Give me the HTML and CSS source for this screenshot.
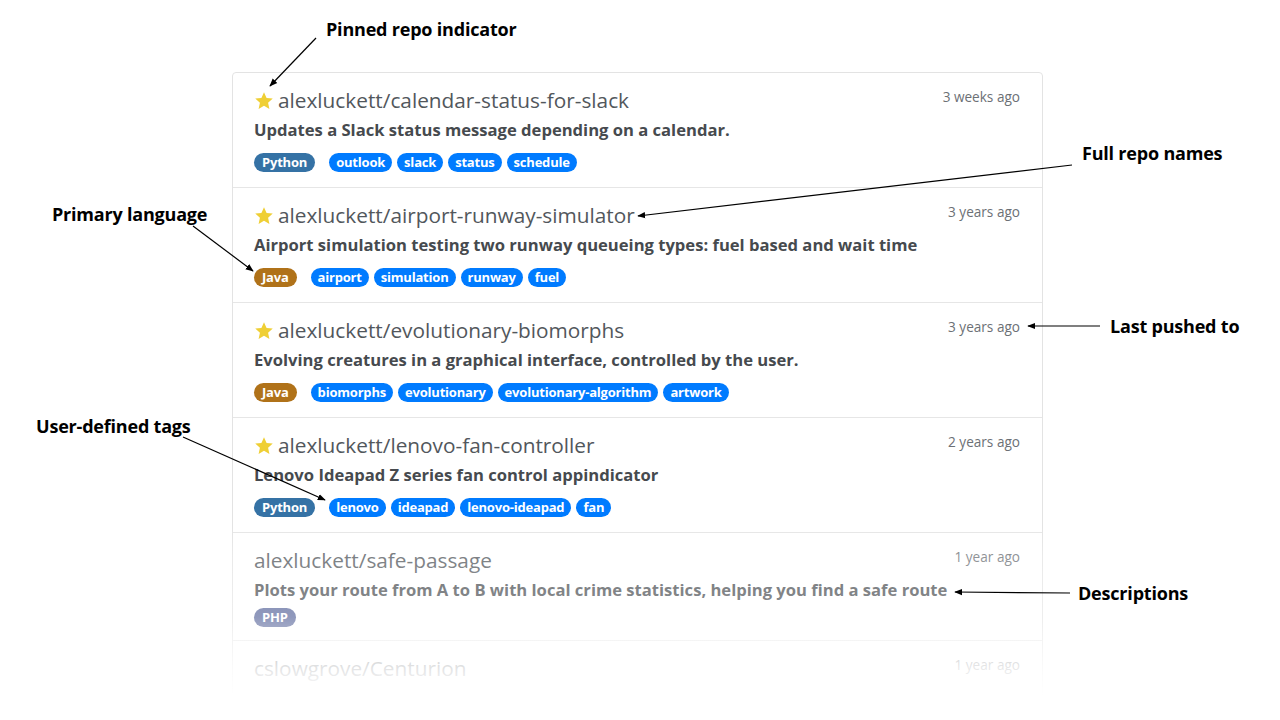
FILE: index.html
```html
<!DOCTYPE html>
<html>
<head>
<meta charset="utf-8">
<link rel="stylesheet" href="styles.css">
</head>
<body>
<div class="page">
  <div class="list-wrap">
    <ul class="repo-list">
      <li class="repo">
        <div class="repo-head">
          <span class="repo-name"><svg class="star" viewBox="0 0 24 24"><path d="M12 1.5l3.1 6.9 7.4.7-5.6 5 1.6 7.4L12 17.7l-6.5 3.8 1.6-7.4-5.6-5 7.4-.7z"/></svg>alexluckett/calendar-status-for-slack</span>
          <span class="repo-time">3 weeks ago</span>
        </div>
        <p class="repo-desc">Updates a Slack status message depending on a calendar.</p>
        <div class="badges">
          <span class="lang lang-python">Python</span>
          <span class="tags"><span class="tag">outlook</span><span class="tag">slack</span><span class="tag">status</span><span class="tag">schedule</span></span>
        </div>
      </li>
      <li class="repo">
        <div class="repo-head">
          <span class="repo-name"><svg class="star" viewBox="0 0 24 24"><path d="M12 1.5l3.1 6.9 7.4.7-5.6 5 1.6 7.4L12 17.7l-6.5 3.8 1.6-7.4-5.6-5 7.4-.7z"/></svg>alexluckett/airport-runway-simulator</span>
          <span class="repo-time">3 years ago</span>
        </div>
        <p class="repo-desc">Airport simulation testing two runway queueing types: fuel based and wait time</p>
        <div class="badges">
          <span class="lang lang-java">Java</span>
          <span class="tags"><span class="tag">airport</span><span class="tag">simulation</span><span class="tag">runway</span><span class="tag">fuel</span></span>
        </div>
      </li>
      <li class="repo">
        <div class="repo-head">
          <span class="repo-name"><svg class="star" viewBox="0 0 24 24"><path d="M12 1.5l3.1 6.9 7.4.7-5.6 5 1.6 7.4L12 17.7l-6.5 3.8 1.6-7.4-5.6-5 7.4-.7z"/></svg>alexluckett/evolutionary-biomorphs</span>
          <span class="repo-time">3 years ago</span>
        </div>
        <p class="repo-desc">Evolving creatures in a graphical interface, controlled by the user.</p>
        <div class="badges">
          <span class="lang lang-java">Java</span>
          <span class="tags"><span class="tag">biomorphs</span><span class="tag">evolutionary</span><span class="tag">evolutionary-algorithm</span><span class="tag">artwork</span></span>
        </div>
      </li>
      <li class="repo">
        <div class="repo-head">
          <span class="repo-name"><svg class="star" viewBox="0 0 24 24"><path d="M12 1.5l3.1 6.9 7.4.7-5.6 5 1.6 7.4L12 17.7l-6.5 3.8 1.6-7.4-5.6-5 7.4-.7z"/></svg>alexluckett/lenovo-fan-controller</span>
          <span class="repo-time">2 years ago</span>
        </div>
        <p class="repo-desc">Lenovo Ideapad Z series fan control appindicator</p>
        <div class="badges">
          <span class="lang lang-python">Python</span>
          <span class="tags"><span class="tag">lenovo</span><span class="tag">ideapad</span><span class="tag">lenovo-ideapad</span><span class="tag">fan</span></span>
        </div>
      </li>
      <li class="repo repo-short">
        <div class="repo-head">
          <span class="repo-name">alexluckett/safe-passage</span>
          <span class="repo-time">1 year ago</span>
        </div>
        <p class="repo-desc">Plots your route from A to B with local crime statistics, helping you find a safe route</p>
        <div class="badges">
          <span class="lang lang-php">PHP</span>
        </div>
      </li>
      <li class="repo">
        <div class="repo-head">
          <span class="repo-name">cslowgrove/Centurion</span>
          <span class="repo-time">1 year ago</span>
        </div>
      </li>
    </ul>
    <div class="fade"></div>
  </div>

  <div class="label label-pinned">Pinned repo indicator</div>
  <div class="label label-full">Full repo names</div>
  <div class="label label-lang">Primary language</div>
  <div class="label label-pushed">Last pushed to</div>
  <div class="label label-tags">User-defined tags</div>
  <div class="label label-desc">Descriptions</div>

  <svg class="arrows" width="1280" height="720" viewBox="0 0 1280 720">
    <defs>
      <marker id="ah" viewBox="0 0 10 10" refX="9" refY="5" markerWidth="8" markerHeight="8" orient="auto-start-reverse" markerUnits="userSpaceOnUse">
        <path d="M0 1L10 5L0 9z" fill="#000"/>
      </marker>
    </defs>
    <g stroke="#000" stroke-width="1.2" fill="none" marker-end="url(#ah)">
      <line x1="316" y1="38" x2="270" y2="86"/>
      <line x1="1072" y1="165" x2="638" y2="216"/>
      <line x1="193" y1="226" x2="253" y2="271"/>
      <line x1="1100" y1="326" x2="1028" y2="326"/>
      <line x1="183" y1="437" x2="325" y2="500"/>
      <line x1="1070" y1="593" x2="955" y2="592"/>
    </g>
  </svg>
</div>
</body>
</html>
```
FILE: styles.css
```css
* { box-sizing: border-box; }
html, body { margin: 0; padding: 0; background: #fff; }
body { font-family: "Open Sans", "Noto Sans", sans-serif; }

.page {
  position: relative;
  width: 1280px;
  height: 720px;
  overflow: hidden;
  padding-top: 72px;
}

.list-wrap {
  position: relative;
  width: 811px;
  margin-left: 232px;
  height: 628px;
  overflow: hidden;
}

.repo-list {
  list-style: none;
  margin: 0;
  padding: 0;
  border: 1px solid #e3e3e3;
  border-radius: 4px;
}

.repo {
  height: 115px;
  padding: 13px 21px 0 21px;
  border-top: 1px solid #e6e6e6;
}
.repo:first-child { border-top: none; height: 114px; }
.repo-short { height: 108px; }

.repo-head {
  display: flex;
  justify-content: space-between;
  align-items: flex-start;
}

.repo-name {
  display: flex;
  align-items: center;
  font-size: 20.8px;
  line-height: 28px;
  color: #52575c;
  letter-spacing: 0;
}

.star {
  width: 20px;
  height: 20px;
  fill: #efcf35;
  margin-right: 4px;
  margin-top: 1px;
}

.repo-time {
  font-size: 13.6px;
  line-height: 20px;
  color: #6c7075;
  margin-top: 1px;
  margin-right: 1px;
}

.repo-desc {
  margin: 4px 0 0 0;
  font-size: 16.6px;
  line-height: 24px;
  font-weight: 700;
  color: #464a4e;
  letter-spacing: 0;
}

.badges {
  display: flex;
  align-items: center;
  gap: 14px;
  margin-top: 11px;
}
.repo-short .badges { margin-top: 6px; }

.tags { display: flex; gap: 5px; }

.lang, .tag {
  display: inline-block;
  height: 19px;
  line-height: 19px;
  padding: 0 7px;
  border-radius: 10px;
  font-size: 13px;
  font-weight: 700;
  color: #fff;
  letter-spacing: -0.2px;
}
.lang { padding: 0 8px; }
.lang-python { background: #3572a5; }
.lang-java { background: #b07219; }
.lang-php { background: #4f5d95; }
.tag { background: #007bff; }

.fade {
  position: absolute;
  left: 0;
  right: 0;
  top: 455px;
  bottom: 0;
  background: linear-gradient(to bottom,
    rgba(255,255,255,0) 0px,
    rgba(255,255,255,0.25) 30px,
    rgba(255,255,255,0.37) 90px,
    rgba(255,255,255,0.84) 141px,
    rgba(255,255,255,1) 168px);
}

.label {
  position: absolute;
  font-family: "Open Sans", "Noto Sans", sans-serif;
  font-weight: 700;
  font-size: 18px;
  line-height: 22px;
  color: #000;
  letter-spacing: -0.2px;
  white-space: nowrap;
}
.label-pinned { left: 326px; top: 18px; }
.label-full { left: 1082px; top: 142px; }
.label-lang { left: 52px; top: 203px; }
.label-pushed { left: 1110px; top: 315px; }
.label-tags { left: 36px; top: 415px; }
.label-desc { left: 1078px; top: 582px; }

.arrows {
  position: absolute;
  left: 0;
  top: 0;
  pointer-events: none;
}
```
